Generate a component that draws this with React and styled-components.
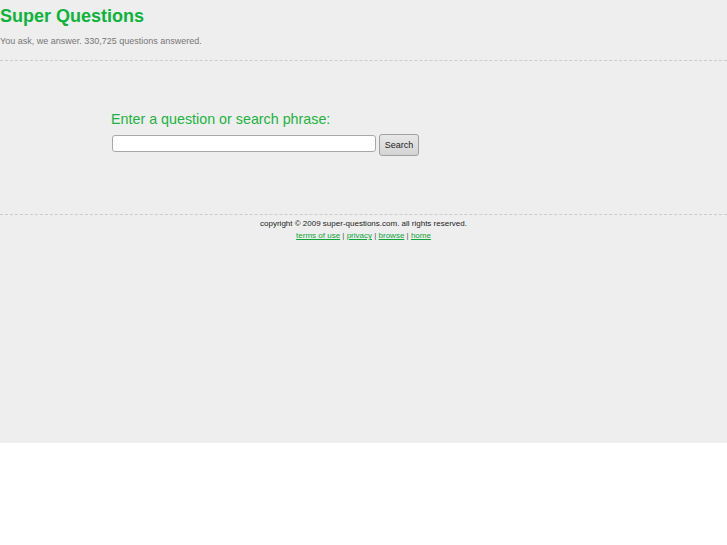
import React from "react";
import styled, { createGlobalStyle } from "styled-components";

const GlobalStyle = createGlobalStyle`
  html, body {
    margin: 0;
    padding: 0;
    background: #ffffff;
  }
  body {
    font-family: "Liberation Sans", Arial, sans-serif;
  }
`;

const Page = styled.div`
  background: #eeeeee;
  height: 443px;
`;

const Header = styled.div`
  padding: 5px 0 13px 0;
  border-bottom: 1px dashed #cccccc;
`;

const Title = styled.h1`
  margin: 0;
  font-size: 18px;
  font-weight: bold;
  color: #0db33a;
  line-height: 22px;
`;

const Tagline = styled.p`
  margin: 8px 0 0 0;
  font-size: 9px;
  line-height: 12px;
  color: #777777;
`;

const SearchArea = styled.div`
  padding: 49px 0 0 111px;
  height: 104px;
  border-bottom: 1px dashed #cccccc;
`;

const Label = styled.label`
  display: block;
  font-size: 14.3px;
  line-height: 18px;
  color: #1cb341;
  margin-bottom: 6px;
`;

const SearchRow = styled.form`
  display: flex;
  align-items: flex-start;
  gap: 3px;
  padding-left: 1px;
`;

const Input = styled.input`
  box-sizing: border-box;
  width: 264px;
  height: 17px;
  margin-top: 1px;
  border: 1px solid #a8a8a8;
  border-radius: 3px;
  background: #ffffff;
  padding: 0 3px;
`;

const Button = styled.button`
  box-sizing: border-box;
  height: 22px;
  width: 40px;
  padding: 0;
  font-family: "Liberation Sans", Arial, sans-serif;
  font-size: 9px;
  color: #222222;
  border: 1px solid #a0a0a0;
  border-radius: 3px;
  background: linear-gradient(#e8e8e8, #d4d4d4);
`;

const Footer = styled.div`
  text-align: center;
  padding-top: 3px;
  font-size: 8px;
  line-height: 12px;
  color: #222222;
`;

const Links = styled.div`
  color: #555555;
`;

const Link = styled.a`
  color: #10a33a;
  text-decoration: underline;
`;

export default function App() {
  return (
    <>
      <GlobalStyle />
      <Page>
        <Header>
          <Title>Super Questions</Title>
          <Tagline>You ask, we answer. 330,725 questions answered.</Tagline>
        </Header>
        <SearchArea>
          <Label htmlFor="q">Enter a question or search phrase:</Label>
          <SearchRow onSubmit={(e) => e.preventDefault()}>
            <Input id="q" type="text" />
            <Button type="submit">Search</Button>
          </SearchRow>
        </SearchArea>
        <Footer>
          <div>copyright © 2009 super-questions.com. all rights reserved.</div>
          <Links>
            <Link href="#">terms of use</Link> | <Link href="#">privacy</Link> |{" "}
            <Link href="#">browse</Link> | <Link href="#">home</Link>
          </Links>
        </Footer>
      </Page>
    </>
  );
}
